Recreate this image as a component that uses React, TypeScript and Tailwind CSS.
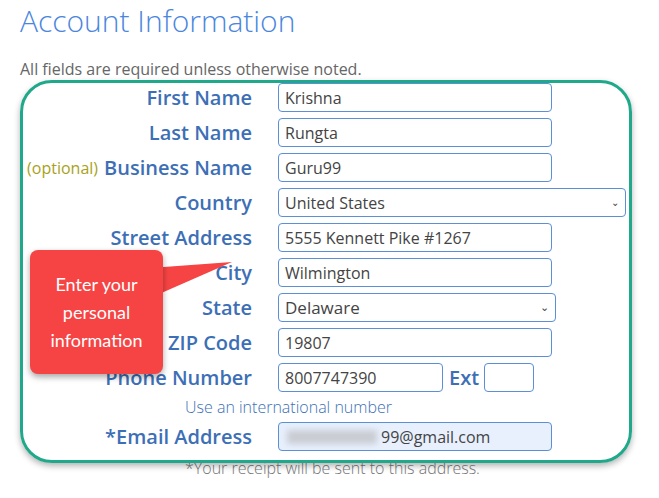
const label = 'text-right text-[20px] font-semibold text-[#3d6fb6] leading-none';
const input = 'h-[29px] border border-[#5b8fd6] rounded-[4px] px-[6px] text-[16px] text-[#444] flex items-center';

function Row({ name, children, extra }: { name: string; children: React.ReactNode; extra?: React.ReactNode }) {
  return (
    <div className="flex items-center h-[35px]">
      <div className={`w-[252px] flex justify-end items-center gap-[6px] ${label}`}>
        {extra}
        <span>{name}</span>
      </div>
      <div className="ml-[26px] flex items-center">{children}</div>
    </div>
  );
}

export default function App() {
  return (
    <div className="relative w-[659px] h-[498px] bg-white overflow-hidden" style={{ fontFamily: '"Open Sans", sans-serif' }}>
      <h1 className="pl-[20px] pt-[1px] text-[30px] font-light text-[#4a86e0] leading-[40px]">Account Information</h1>
      <p className="pl-[20px] mt-[18px] text-[16px] text-[#666] leading-[20px]">All fields are required unless otherwise noted.</p>
      <div className="mt-[1px]">
        <Row name="First Name"><div className={`${input} w-[274px]`}>Krishna</div></Row>
        <Row name="Last Name"><div className={`${input} w-[274px]`}>Rungta</div></Row>
        <Row name="Business Name" extra={<span className="text-[16px] font-normal text-[#a8a21a]">(optional)</span>}>
          <div className={`${input} w-[274px]`}>Guru99</div>
        </Row>
        <Row name="Country">
          <div className={`${input} w-[348px] h-[24px] text-[14px] justify-between px-[4px]`}>United States<span className="text-[10px]">⌄</span></div>
        </Row>
        <Row name="Street Address"><div className={`${input} w-[274px]`}>5555 Kennett Pike #1267</div></Row>
        <Row name="City"><div className={`${input} w-[274px]`}>Wilmington</div></Row>
        <Row name="State">
          <div className={`${input} w-[278px] h-[27px] text-[17px] justify-between px-[4px] text-[#333]`}>Delaware<span className="text-[11px]">⌄</span></div>
        </Row>
        <Row name="ZIP Code"><div className={`${input} w-[274px]`}>19807</div></Row>
        <Row name="Phone Number">
          <div className={`${input} w-[165px]`}>8007747390</div>
          <span className={`${label} ml-[6px]`}>Ext</span>
          <div className={`${input} w-[50px] ml-[5px]`}></div>
        </Row>
        <p className="pl-[185px] text-[16px] text-[#3d6fb6] leading-[24px] font-light">Use an international number</p>
        <Row name="*Email Address">
          <div className={`${input} w-[274px] bg-[#e8f0fe]`}>
            <span className="inline-block w-[90px] h-[14px] bg-[#c9ccd2] blur-[3px] mr-[4px] ml-[2px]"></span>99@gmail.com
          </div>
        </Row>
        <p className="pl-[185px] mt-[4px] text-[16px] text-[#777] leading-[20px] font-light">*Your receipt will be sent to this address.</p>
      </div>
      <div className="absolute left-[20px] top-[80px] w-[612px] h-[383px] border-[3px] border-[#1fa88a] rounded-[32px] shadow-[0_3px_6px_rgba(0,0,0,0.3)] pointer-events-none"></div>
      <div className="absolute left-[30px] top-[250px]">
        <svg className="absolute left-[120px] top-[10px]" width="90" height="40" viewBox="0 0 90 40">
          <polygon points="0,8 82,2 0,38" fill="#f64444" />
        </svg>
        <div className="relative w-[133px] h-[124px] bg-[#f64444] rounded-[8px] shadow-[0_3px_6px_rgba(0,0,0,0.35)] flex items-center justify-center text-center text-white text-[18px] leading-[28px]" style={{ fontFamily: '"Comic Sans MS", "Lato", cursive' }}>
          Enter your<br />personal<br />information
        </div>
      </div>
    </div>
  );
}
